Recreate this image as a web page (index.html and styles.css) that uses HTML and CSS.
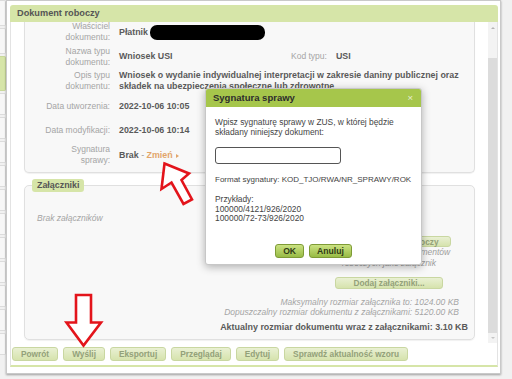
FILE: index.html
```html
<!DOCTYPE html>
<html lang="pl">
<head>
    <meta charset="UTF-8">
    <meta name="viewport" content="width=device-width, initial-scale=1.0">
    <title>Dokument roboczy</title>
    <link rel="stylesheet" href="styles.css">
</head>
<body>
    <div class="page">
        <!-- Zakładki po lewej -->
        <div class="sidebar">
            <div class="tab tall"></div>
            <div class="tab tall"></div>
            <div class="tab active"></div>
            <div class="tab"></div>
            <div class="tab"></div>
            <div class="tab"></div>
            <div class="tab"></div>
            <div class="tab"></div>
            <div class="tab"></div>
            <div class="tab"></div>
            <div class="tab"></div>
            <div class="tab"></div>
            <div class="tab"></div>
            <div class="tab"></div>
        </div>

        <div class="window">
            <div class="win-head">Dokument roboczy</div>
            <div class="win-body">
                <div class="scroll">
                    <div class="scroll-content">
                        <!-- Dane dokumentu -->
                        <div class="panel details">
                            <div class="row">
                                <div class="label">Właściciel<br>dokumentu:</div>
                                <div class="value">Płatnik -<span class="redacted"></span></div>
                            </div>
                            <div class="row">
                                <div class="label">Nazwa typu<br>dokumentu:</div>
                                <div class="value split">
                                    <span class="type-name">Wniosek USI</span>
                                    <span class="sub-label">Kod typu:</span>
                                    <span>USI</span>
                                </div>
                            </div>
                            <div class="row">
                                <div class="label">Opis typu<br>dokumentu:</div>
                                <div class="value">Wniosek o wydanie indywidualnej interpretacji w zakresie daniny publicznej oraz<br>składek na ubezpieczenia społeczne lub zdrowotne</div>
                            </div>
                            <div class="row">
                                <div class="label">Data utworzenia:</div>
                                <div class="value">2022-10-06 10:05</div>
                            </div>
                            <div class="row">
                                <div class="label">Data modyfikacji:</div>
                                <div class="value">2022-10-06 10:14</div>
                            </div>
                            <div class="row">
                                <div class="label">Sygnatura<br>sprawy:</div>
                                <div class="value">Brak <span class="dash">-</span> <a class="change" href="#">Zmień</a><span class="change-arrow"></span></div>
                            </div>
                        </div>

                        <!-- Załączniki -->
                        <fieldset class="panel attachments">
                            <legend>Załączniki</legend>
                            <div class="att-main">
                                <div class="att-empty">Brak załączników</div>
                                <div class="att-tools">
                                    <button class="btn btn-tool">Dodaj dokument roboczy</button>
                                    <div class="att-note">Możliwość dodania dokumentów<br>roboczych jako załącznik</div>
                                    <button class="btn btn-add">Dodaj załączniki...</button>
                                </div>
                            </div>
                            <div class="att-limits">
                                Maksymalny rozmiar załącznika to: 1024.00 KB<br>
                                Dopuszczalny rozmiar dokumentu z załącznikami: 5120.00 KB
                            </div>
                            <div class="att-total">Aktualny rozmiar dokumentu wraz z załącznikami: 3.10 KB</div>
                        </fieldset>
                    </div>

                    <div class="scrollbar">
                        <div class="sb-up"></div>
                        <div class="sb-space"></div>
                        <div class="sb-thumb"></div>
                        <div class="sb-down"></div>
                    </div>
                </div>

                <div class="actions">
                    <button class="btn">Powrót</button>
                    <button class="btn">Wyślij</button>
                    <button class="btn">Eksportuj</button>
                    <button class="btn">Przeglądaj</button>
                    <button class="btn">Edytuj</button>
                    <button class="btn">Sprawdź aktualność wzoru</button>
                </div>
            </div>
        </div>

        <!-- Okno sygnatury -->
        <div class="dialog">
            <div class="dialog-head">
                <span>Sygnatura sprawy</span>
                <span class="dialog-close">×</span>
            </div>
            <div class="dialog-body">
                <p>Wpisz sygnaturę sprawy w ZUS, w której będzie<br>składany niniejszy dokument:</p>
                <input type="text" class="sig-input">
                <p class="format">Format sygnatury: KOD_TJO/RWA/NR_SPRAWY/ROK</p>
                <p>Przykłady:<br>100000/4121/926/2020<br>100000/72-73/926/2020</p>
                <div class="dialog-buttons">
                    <button class="dlg-btn">OK</button>
                    <button class="dlg-btn">Anuluj</button>
                </div>
            </div>
        </div>

        <!-- Strzałki -->
        <svg class="marks" width="512" height="379" viewBox="0 0 512 379">
            <polygon points="164.5,163.5 189,173.5 181.5,180 192,199.5 183.5,204 171.5,182.5 161.5,189" />
            <polygon points="76,295 91,295 91,322.5 101,322.5 83.5,345.5 66.5,322.5 76,322.5" />
        </svg>
    </div>
</body>
</html>
```

FILE: styles.css
```css
/* Układ główny */
body {
    margin: 0;
    background-color: #f1f1f1;
    font-family: "Liberation Sans", Arial, sans-serif;
    font-size: 8.5px;
    color: #555;
}
.page {
    position: relative;
    width: 512px;
    height: 379px;
    display: flex;
    overflow: hidden;
}

/* Zakładki */
.sidebar {
    width: 6px;
    display: flex;
    flex-direction: column;
    gap: 2px;
}
.sidebar .tab {
    height: 20px;
    background-color: #f7f7f7;
    border: 1px solid #dcdcdc;
    border-left: none;
    border-radius: 0 2px 2px 0;
}
.sidebar .tab.tall {
    height: 24px;
}
.sidebar .tab.active {
    height: 33px;
    background-color: #d6e5a8;
    border-color: #c9d99b;
}

/* Okno dokumentu */
.window {
    width: 495px;
    height: 374px;
    box-sizing: border-box;
    background-color: #fff;
    border: 1px solid #c9c9c9;
    padding: 4px 2px 0 3px;
    box-shadow: 0 1px 2px rgba(0, 0, 0, 0.35);
}
.win-head {
    height: 17px;
    line-height: 17px;
    padding-left: 7px;
    background-color: #d6e5a8;
    border-radius: 3px 3px 0 0;
    font-size: 9.2px;
    font-weight: bold;
    color: #555;
}
.win-body {
    border: 1px solid #e3e3e3;
    border-top: none;
    border-bottom: 2px solid #d6e5a8;
}
.scroll {
    display: flex;
    height: 321px;
}
.scroll-content {
    flex: 1;
    overflow: hidden;
    padding: 0 13px;
}

/* Pasek przewijania */
.scrollbar {
    width: 9px;
    display: flex;
    flex-direction: column;
    background-color: #f3f3f3;
}
.sb-up, .sb-down {
    height: 12px;
    display: flex;
    align-items: center;
    justify-content: center;
}
.sb-up::after, .sb-down::after {
    content: "";
    border-left: 2px solid transparent;
    border-right: 2px solid transparent;
}
.sb-up::after {
    border-bottom: 2px solid #b5b5b5;
}
.sb-down {
    height: 10px;
}
.sb-down::after {
    border-top: 2px solid #c5c5c5;
}
.sb-space {
    height: 24px;
}
.sb-thumb {
    height: 275px;
    background-color: #dcdcdc;
}

/* Panele */
.panel {
    background-color: #f8f8f8;
    border: 1px solid #e0e0e0;
    border-radius: 5px;
    box-shadow: 0 1px 1px rgba(0, 0, 0, 0.06);
}
.details {
    margin-top: -2px;
    border-top: none;
    border-radius: 0 0 5px 5px;
    padding-bottom: 4px;
}
.row {
    display: flex;
    align-items: center;
    height: 24.6px;
    line-height: 11px;
}
.label {
    flex: none;
    width: 85px;
    padding-right: 9px;
    text-align: right;
    color: #a5a5a5;
}
.value {
    font-size: 8.85px;
    font-weight: bold;
    color: #5a5a5a;
}
.value.split {
    display: flex;
}
.type-name {
    width: 172px;
}
.sub-label {
    font-size: 8.5px;
    font-weight: normal;
    color: #a5a5a5;
    margin-right: 9px;
}
.redacted {
    display: inline-block;
    width: 115px;
    height: 15px;
    margin-left: -3px;
    vertical-align: middle;
    background-color: #000;
    border-radius: 7px;
}
.dash {
    font-weight: normal;
    color: #999;
}
.change {
    color: #e2a56a;
    text-decoration: none;
}
.change-arrow {
    display: inline-block;
    margin-left: 3px;
    border-top: 2.5px solid transparent;
    border-bottom: 2.5px solid transparent;
    border-left: 3px solid #e2a56a;
}

/* Załączniki */
.attachments {
    margin: 6px 0 0;
    padding: 0;
    min-width: 0;
}
.attachments legend {
    margin-left: 7px;
    padding: 2px 5px;
    line-height: 9px;
    background-color: #d6e5a8;
    border-radius: 3px;
    font-weight: bold;
    font-size: 8.9px;
    color: #555;
}
.att-main {
    display: flex;
    justify-content: space-between;
}
.att-empty {
    margin-top: 21.5px;
    padding-left: 12px;
    line-height: 11px;
    font-style: italic;
    color: #a5a5a5;
}
.att-tools {
    width: 130px;
    margin: 44px 20px 0 0;
    text-align: center;
}
.att-note {
    line-height: 11px;
    font-style: italic;
    color: #9e9e9e;
}
.att-limits {
    margin-top: 8px;
    padding-right: 15px;
    text-align: right;
    line-height: 10px;
    font-style: italic;
    color: #a5a5a5;
}
.att-total {
    margin-top: 5.5px;
    padding: 0 6px 5.5px 0;
    text-align: right;
    line-height: 11px;
    font-size: 8.95px;
    font-weight: bold;
    color: #5a5a5a;
}

/* Przyciski */
.btn {
    height: 14px;
    padding: 0 8px;
    font-family: inherit;
    font-size: 8.3px;
    font-weight: bold;
    color: #93a179;
    background: linear-gradient(#e9f0d3, #d6e3ad);
    border: 1px solid #c9d7a1;
    border-radius: 3px;
}
.btn-tool {
    width: 124px;
    height: 11px;
}
.btn-add {
    width: 108px;
    height: 12px;
    margin-top: 8px;
}
.actions {
    height: 22px;
    box-sizing: border-box;
    padding: 4px 0 0 1px;
    display: flex;
    align-items: flex-start;
    gap: 5px;
}

/* Okno dialogowe */
.dialog {
    position: absolute;
    left: 205px;
    top: 88px;
    width: 217px;
    box-sizing: border-box;
    background-color: #fff;
    border: 1px solid #c7c7c7;
    border-radius: 3px;
    box-shadow: 0 2px 8px rgba(0, 0, 0, 0.3);
}
.dialog-head {
    height: 18px;
    line-height: 18px;
    padding: 0 8px 0 7px;
    display: flex;
    justify-content: space-between;
    background-color: #a6c64b;
    border-radius: 2px 2px 0 0;
    font-size: 9.5px;
    font-weight: bold;
    color: #2d2d2d;
}
.dialog-close {
    font-weight: normal;
    color: #e6eed5;
}
.dialog-body {
    padding: 11px 9px 6px;
    font-size: 8.4px;
    line-height: 9.7px;
    color: #444;
}
.dialog-body p {
    margin: 0;
}
.sig-input {
    display: block;
    width: 126px;
    height: 17px;
    box-sizing: border-box;
    margin: 10px 0 11px;
    border: 1px solid #555;
    border-radius: 3px;
}
.dialog-body .format {
    margin-bottom: 9.7px;
    font-size: 8px;
    white-space: nowrap;
}
.dialog-buttons {
    display: flex;
    justify-content: center;
    gap: 5px;
    margin-top: 20px;
}
.dlg-btn {
    height: 14px;
    padding: 0 7px;
    font-family: inherit;
    font-size: 8.6px;
    font-weight: bold;
    color: #2f3a16;
    background: linear-gradient(#cbe282, #98bb45);
    border: 1px solid #7e9b36;
    border-radius: 3px;
}

/* Strzałki */
.marks {
    position: absolute;
    left: 0;
    top: 0;
    pointer-events: none;
}
.marks polygon {
    fill: #fff;
    stroke: #e3141b;
    stroke-width: 2.6;
    stroke-linejoin: miter;
}
```
